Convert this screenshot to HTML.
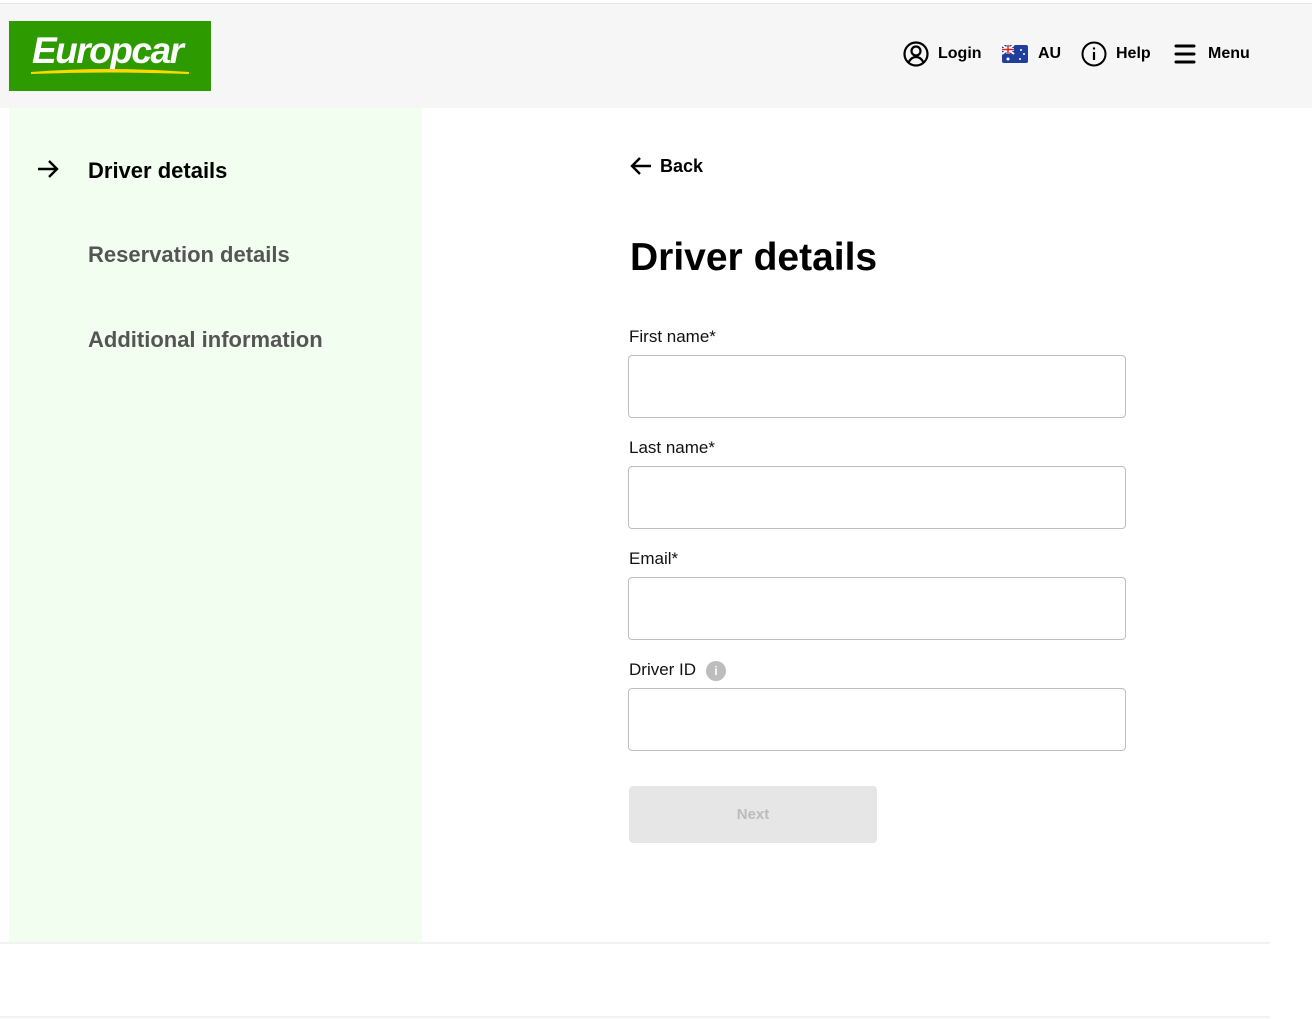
<!DOCTYPE html>
<html><head><meta charset="utf-8"><style>
*{margin:0;padding:0;box-sizing:border-box}
body{width:1312px;height:1019px;background:#fff;font-family:"Liberation Sans",sans-serif;position:relative;overflow:hidden;color:#000}
.a{position:absolute}
.hdr{left:0;top:3px;width:1312px;height:105px;background:#f6f6f6;border-top:1px solid #e8e8e8}
.logo{left:9px;top:21px;width:202px;height:70px;background:#2d9a00}
.logo span{position:absolute;left:23px;top:9px;color:#fff;font-weight:bold;font-style:italic;font-size:37px;letter-spacing:-1.5px}
.nav{top:41px;height:26px;line-height:26px;font-weight:bold;font-size:16px;display:flex;align-items:center}
.side{left:9px;top:108px;width:413px;height:835px;background:#f2fff0}
.s{font-weight:bold;font-size:22px;left:88px}
.lbl{left:629px;font-size:17px;color:#111}
.inp{left:628px;width:498px;height:63px;border:1px solid #bdbdbd;border-radius:4px;background:#fff}
</style></head><body>
<div class="a hdr"></div>
<div class="a logo"><span>Europcar</span>
<svg class="a" style="left:22px;top:46px" width="158" height="8"><path d="M0 6 Q79 0 158 6 Q79 3 0 6Z" fill="#ffd800" stroke="#ffd800" stroke-width="2"/></svg></div>
<div class="a nav" style="left:903px">
<svg width="26" height="26" viewBox="0 0 26 26" fill="none" stroke="#000" stroke-width="2.2"><circle cx="13" cy="13" r="11.5"/><circle cx="13" cy="10" r="4.5"/><path d="M5.5 21.5c2-4 4.5-5.5 7.5-5.5s5.5 1.5 7.5 5.5"/></svg>
<span style="margin-left:9px">Login</span></div>
<div class="a nav" style="left:1002px">
<svg width="26" height="18" viewBox="0 0 26 18"><rect width="26" height="18" rx="2" fill="#1f3f9a"/><rect width="12" height="9" fill="#1f3f9a"/><path d="M0 0L12 9M12 0L0 9" stroke="#fff" stroke-width="2"/><path d="M6 0v9M0 4.5h12" stroke="#fff" stroke-width="3"/><path d="M6 0v9M0 4.5h12" stroke="#d22" stroke-width="1.5"/><circle cx="6" cy="14" r="1.5" fill="#fff"/><circle cx="19" cy="5" r="1" fill="#fff"/><circle cx="22" cy="9" r="1" fill="#fff"/><circle cx="18" cy="14" r="1" fill="#fff"/></svg>
<span style="margin-left:10px">AU</span></div>
<div class="a nav" style="left:1081px">
<svg width="26" height="26" viewBox="0 0 26 26" fill="none" stroke="#000" stroke-width="2"><circle cx="13" cy="13" r="11.5"/><path d="M13 11v8" stroke-width="2.2"/><circle cx="13" cy="7.5" r="1.2" fill="#000" stroke="none"/></svg>
<span style="margin-left:9px">Help</span></div>
<div class="a nav" style="left:1174px">
<svg width="22" height="22" viewBox="0 0 22 22" stroke="#000" stroke-width="3" stroke-linecap="round"><path d="M2 3h18M2 11h18M2 19h18"/></svg>
<span style="margin-left:12px">Menu</span></div>
<div class="a side"></div>
<svg class="a" style="left:37px;top:159px" width="22" height="20" viewBox="0 0 22 20" fill="none" stroke="#000" stroke-width="2.4"><path d="M1 10h19M12 2l8 8-8 8"/></svg>
<div class="a s" style="top:158px">Driver details</div>
<div class="a s" style="top:242px;color:#555">Reservation details</div>
<div class="a s" style="top:327px;color:#555">Additional information</div>
<svg class="a" style="left:630px;top:155px" width="22" height="22" viewBox="0 0 22 22" fill="none" stroke="#000" stroke-width="2.4"><path d="M21 11H2M10 3l-8 8 8 8"/></svg>
<div class="a" style="left:660px;top:156px;font-weight:bold;font-size:18px">Back</div>
<div class="a" style="left:630px;top:236px;font-weight:bold;font-size:39px">Driver details</div>
<div class="a lbl" style="top:327px">First name*</div>
<div class="a inp" style="top:355px"></div>
<div class="a lbl" style="top:438px">Last name*</div>
<div class="a inp" style="top:466px"></div>
<div class="a lbl" style="top:549px">Email*</div>
<div class="a inp" style="top:577px"></div>
<div class="a lbl" style="top:660px">Driver ID</div>
<div class="a" style="left:706px;top:661px;width:20px;height:20px;border-radius:50%;background:#bdbdbd;color:#fff;font-size:12px;font-weight:bold;text-align:center;line-height:20px">i</div>
<div class="a inp" style="top:688px"></div>
<div class="a" style="left:629px;top:786px;width:248px;height:57px;background:#e6e6e6;border-radius:4px;color:#bbb;font-weight:bold;font-size:15px;text-align:center;line-height:57px">Next</div>
<div class="a" style="left:0;top:942px;width:1270px;height:2px;background:#f2f2f2"></div>
<div class="a" style="left:0;top:1016px;width:1270px;height:2px;background:#f2f2f2"></div>
</body></html>
